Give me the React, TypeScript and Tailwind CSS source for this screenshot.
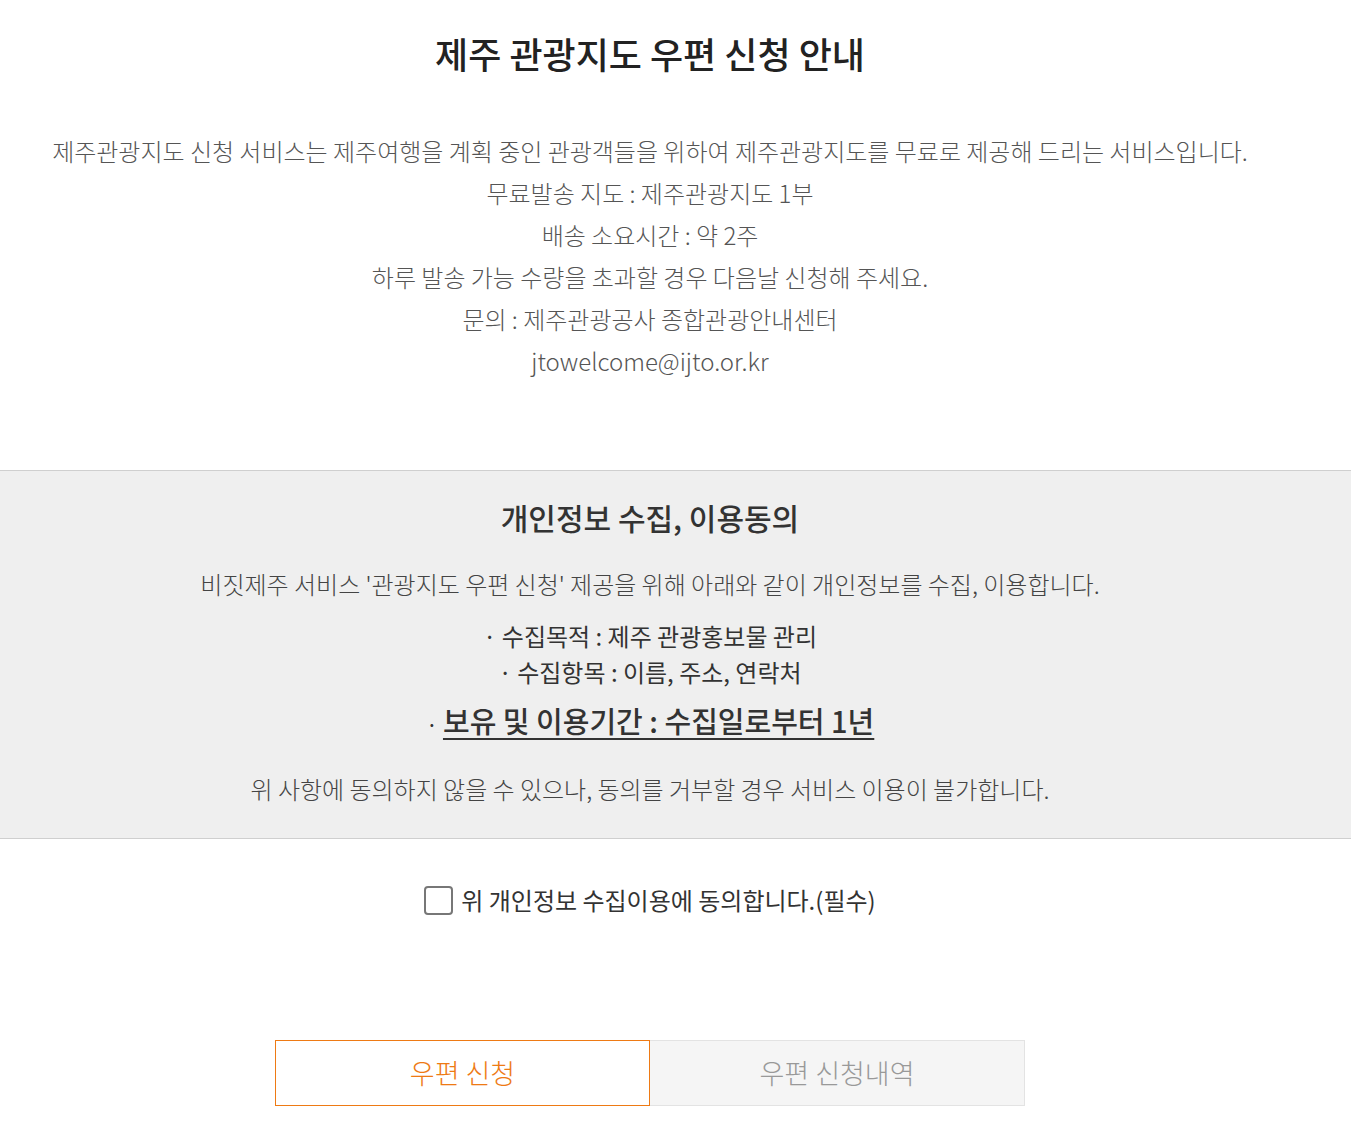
// 제주 관광지도 우편 신청 안내 페이지
// 본문은 1300px 폭 기준 가운데 정렬, 회색 동의 박스만 화면 전체 폭

const FONT = "font-['Noto_Sans_CJK_KR','Noto_Sans',sans-serif]";

const INFO_LINES = [
  "제주관광지도 신청 서비스는 제주여행을 계획 중인 관광객들을 위하여 제주관광지도를 무료로 제공해 드리는 서비스입니다.",
  "무료발송 지도 : 제주관광지도 1부",
  "배송 소요시간 : 약 2주",
  "하루 발송 가능 수량을 초과할 경우 다음날 신청해 주세요.",
  "문의 : 제주관광공사 종합관광안내센터",
  "jtowelcome@ijto.or.kr",
];

export default function App() {
  return (
    <div className={`min-h-screen w-full bg-white ${FONT}`}>
      {/* 상단 안내 */}
      <div className="w-[1300px] pt-[26px] text-center">
        <h1 className="text-[36px] leading-[54px] font-medium text-[#222]">
          제주 관광지도 우편 신청 안내
        </h1>
        <div className="mt-[50px] text-[24px] leading-[42px] font-light text-[#555]">
          {INFO_LINES.map((line) => (
            <p key={line}>{line}</p>
          ))}
        </div>
      </div>

      {/* 개인정보 동의 박스 */}
      <div className="mt-[88px] border-y border-[#cfcfcf] bg-[#efefef]">
        <div className="w-[1300px] pt-[24px] pb-[31px] text-center">
          <h2 className="text-[30px] leading-[44px] font-medium text-[#333]">
            개인정보 수집, 이용동의
          </h2>
          <p className="mt-[27px] text-[24px] leading-[36px] font-light text-[#444]">
            비짓제주 서비스 '관광지도 우편 신청' 제공을 위해 아래와 같이 개인정보를 수집, 이용합니다.
          </p>
          <div className="mt-[16px] text-[24px] leading-[36px] text-[#333]">
            <p>· 수집목적 : 제주 관광홍보물 관리</p>
            <p>· 수집항목 : 이름, 주소, 연락처</p>
          </div>
          <p className="mt-[10px] text-[22px] leading-[40px] text-[#333]">
            ·{" "}
            <span className="text-[29px] font-medium underline underline-offset-[5px] decoration-[2px]">
              보유 및 이용기간 : 수집일로부터 1년
            </span>
          </p>
          <p className="mt-[28px] text-[24px] leading-[36px] font-light text-[#444]">
            위 사항에 동의하지 않을 수 있으나, 동의를 거부할 경우 서비스 이용이 불가합니다.
          </p>
        </div>
      </div>

      {/* 동의 체크 */}
      <div className="w-[1300px] mt-[43px] flex justify-center">
        <label className="flex items-center gap-[8px] text-[24px] leading-[36px] text-[#333] cursor-pointer">
          <span className="block w-[29px] h-[29px] rounded-[4px] border-2 border-[#777] bg-white" />
          위 개인정보 수집이용에 동의합니다.(필수)
        </label>
      </div>

      {/* 버튼 */}
      <div className="w-[1300px] mt-[122px] pb-[36px] flex justify-center">
        <button className="w-[375px] h-[66px] border border-[#ee7a14] bg-white text-[27px] font-light text-[#ee7a14]">
          우편 신청
        </button>
        <button className="w-[375px] h-[66px] border border-[#e3e3e3] border-l-0 bg-[#f5f5f5] text-[27px] font-light text-[#999]">
          우편 신청내역
        </button>
      </div>
    </div>
  );
}
